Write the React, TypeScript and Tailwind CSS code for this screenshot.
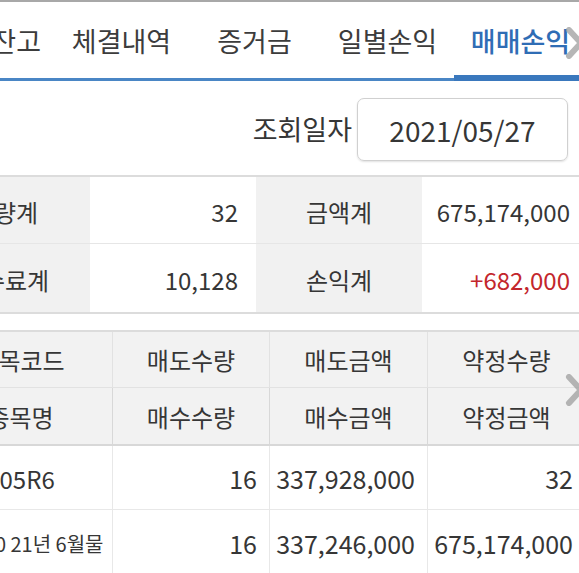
import React from 'react';

const font = { fontFamily: '"Noto Sans CJK KR", "Noto Sans", sans-serif' };

const tabs = ['체결내역', '증거금', '일별손익', '매매손익'];

function Chevron({ className }: { className: string }) {
  return (
    <svg className={className} width="22" height="32" viewBox="0 0 22 32" fill="none">
      <polyline points="5,3 17,16 5,29" stroke="#9e9e9e" strokeOpacity="0.75" strokeWidth="6" strokeLinejoin="round" strokeLinecap="round" />
    </svg>
  );
}

export default function App() {
  return (
    <div className="relative w-[579px] h-[573px] overflow-hidden bg-white text-[#363636]" style={font}>
      {/* 탭 */}
      <div className="border-t-2 border-[#a8a8a8]">
        <div className="flex h-[79px] items-center border-b-[3px] border-[#4a86c5] text-[27px] text-[#3c3c3c]">
          <div className="ml-[-20px] w-[75px] flex-none text-right pr-[14px] pt-[3px] whitespace-nowrap">잔고</div>
          {tabs.map((t) => {
            const active = t === '매매손익';
            return (
              <div key={t} className="relative w-[133px] h-full flex-none flex items-center justify-center">
                <span className={active ? 'pt-[3px] text-[#2f6db5] font-medium' : 'pt-[3px]'}>{t}</span>
                {active && <span className="absolute left-0 right-0 bottom-[-3px] h-[6px] bg-[#3a78bd]" />}
              </div>
            );
          })}
        </div>
      </div>
      <Chevron className="absolute right-[-7px] top-[27px]" />

      {/* 조회일자 */}
      <div className="flex h-[94px] items-center justify-end pr-[11px] pt-[3px]">
        <span className="text-[27px] mr-[5px]">조회일자</span>
        <div className="w-[211px] h-[63px] flex items-center justify-center border border-[#d0d0d0] rounded-[7px] shadow-[0_1px_2px_rgba(0,0,0,0.12)] text-[28px]">
          2021/05/27
        </div>
      </div>

      {/* 합계 */}
      <div className="border-t-2 border-b-2 border-[#dcdcdc]">
        <div className="ml-[-80px] w-[668px] grid grid-cols-[170px_166px_166px_166px] text-[24px]">
          <div className="h-[67px] pt-[3px] flex items-center justify-center bg-[#f1f1f1] border-b border-[#e6e6e6]">수량계</div>
          <div className="h-[67px] pt-[3px] flex items-center justify-end pr-[18px] border-b border-[#e6e6e6]">32</div>
          <div className="h-[67px] pt-[3px] flex items-center justify-center bg-[#f1f1f1] border-b border-[#e6e6e6]">금액계</div>
          <div className="h-[67px] pt-[3px] flex items-center justify-end pr-[18px] border-b border-[#e6e6e6]">675,174,000</div>
          <div className="h-[68px] pt-[3px] flex items-center justify-center bg-[#f1f1f1]">수수료계</div>
          <div className="h-[68px] pt-[3px] flex items-center justify-end pr-[18px]">10,128</div>
          <div className="h-[68px] pt-[3px] flex items-center justify-center bg-[#f1f1f1]">손익계</div>
          <div className="h-[68px] pt-[3px] flex items-center justify-end pr-[18px] text-[#c3262c]">+682,000</div>
        </div>
      </div>

      {/* 상세 */}
      <div className="mt-[16px] border-t-2 border-[#dcdcdc]">
        <div className="ml-[-71px] w-[656px] grid grid-cols-[184px_157px_158px_157px] text-[24px]">
          <div className="h-[56px] flex items-center justify-center bg-[#f2f2f2] border-b border-r border-[#e2e2e2]">종목코드</div>
          <div className="h-[56px] flex items-center justify-center bg-[#f2f2f2] border-b border-r border-[#e2e2e2]">매도수량</div>
          <div className="h-[56px] flex items-center justify-center bg-[#f2f2f2] border-b border-r border-[#e2e2e2]">매도금액</div>
          <div className="h-[56px] flex items-center justify-center bg-[#f2f2f2] border-b border-[#e2e2e2]">약정수량</div>
          <div className="h-[58px] pt-[2px] flex items-center justify-center bg-[#f2f2f2] border-b-2 border-r border-[#d8d8d8]">종목명</div>
          <div className="h-[58px] pt-[2px] flex items-center justify-center bg-[#f2f2f2] border-b-2 border-r border-[#d8d8d8]">매수수량</div>
          <div className="h-[58px] pt-[2px] flex items-center justify-center bg-[#f2f2f2] border-b-2 border-r border-[#d8d8d8]">매수금액</div>
          <div className="h-[58px] pt-[2px] flex items-center justify-center bg-[#f2f2f2] border-b-2 border-[#d8d8d8]">약정금액</div>

          <div className="h-[64px] pt-[2px] flex items-center justify-center border-b border-r border-[#e8e8e8]">105R6</div>
          <div className="h-[64px] pt-[2px] flex items-center justify-end pr-[12px] border-b border-r border-[#e8e8e8] text-[25px]">16</div>
          <div className="h-[64px] pt-[2px] flex items-center justify-end pr-[12px] border-b border-r border-[#e8e8e8] text-[25px]">337,928,000</div>
          <div className="h-[64px] pt-[2px] flex items-center justify-end pr-[12px] border-b border-[#e8e8e8] text-[25px]">32</div>
          <div className="h-[64px] pt-[3px] pr-[20px] flex items-center justify-center border-r border-[#e8e8e8] text-[20px] whitespace-nowrap">코스피200 21년 6월물</div>
          <div className="h-[64px] pt-[3px] flex items-center justify-end pr-[12px] border-r border-[#e8e8e8] text-[25px]">16</div>
          <div className="h-[64px] pt-[3px] flex items-center justify-end pr-[12px] border-r border-[#e8e8e8] text-[25px]">337,246,000</div>
          <div className="h-[64px] pt-[3px] flex items-center justify-end pr-[12px] text-[25px]">675,174,000</div>
        </div>
      </div>
      <Chevron className="absolute right-[-7px] top-[374px]" />
    </div>
  );
}
